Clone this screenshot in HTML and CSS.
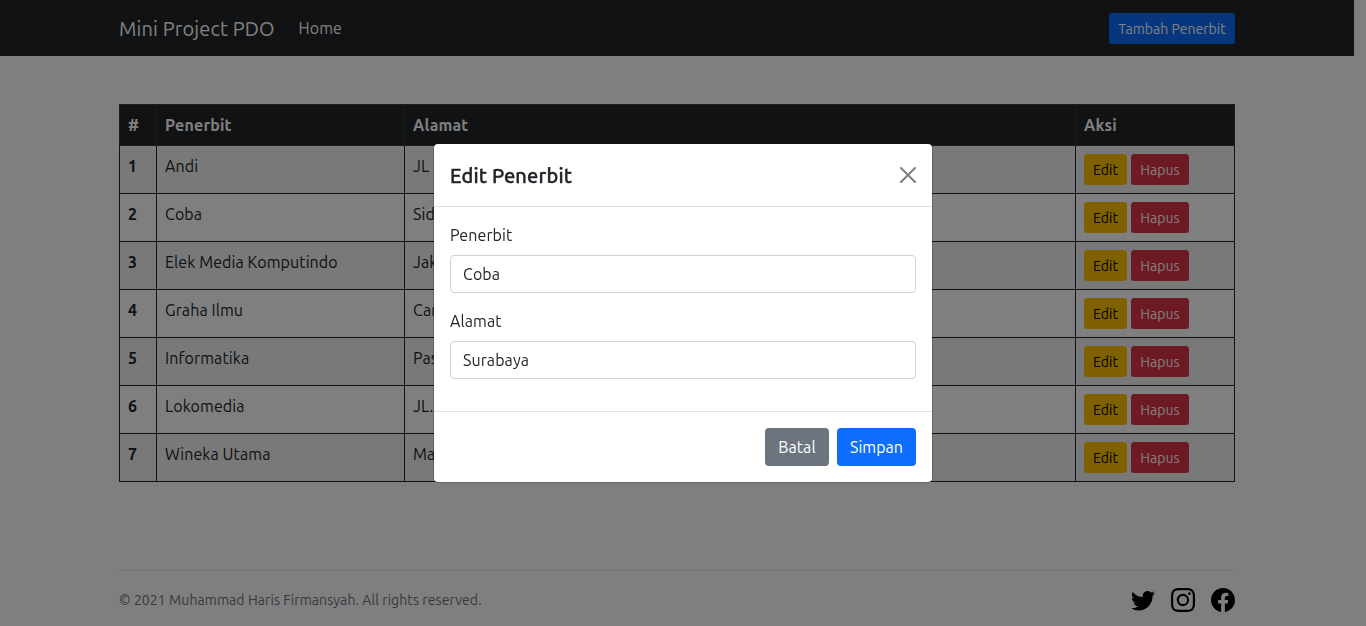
FILE: index.html
```
<!DOCTYPE html>
<html lang="id">
<head>
<meta charset="utf-8">
<title>Mini Project PDO</title>
<link rel="stylesheet" href="styles.css">
</head>
<body>
<div class="page">
  <nav class="navbar">
    <div class="container navbar-row">
      <a class="brand">Mini Project PDO</a>
      <a class="nav-link">Home</a>
      <button class="btn btn-sm btn-primary btn-add">Tambah Penerbit</button>
    </div>
  </nav>
  <main class="container main">
    <table class="table">
      <colgroup><col class="col-no"><col class="col-name"><col class="col-address"><col class="col-action"></colgroup>
      <thead><tr><th>#</th><th>Penerbit</th><th>Alamat</th><th>Aksi</th></tr></thead>
      <tbody>
        <tr><th>1</th><td>Andi</td><td>JL</td><td><div class="actions"><button class="btn btn-sm btn-warning">Edit</button><button class="btn btn-sm btn-danger">Hapus</button></div></td></tr>
        <tr><th>2</th><td>Coba</td><td>Sid</td><td><div class="actions"><button class="btn btn-sm btn-warning">Edit</button><button class="btn btn-sm btn-danger">Hapus</button></div></td></tr>
        <tr><th>3</th><td>Elek Media Komputindo</td><td>Jak</td><td><div class="actions"><button class="btn btn-sm btn-warning">Edit</button><button class="btn btn-sm btn-danger">Hapus</button></div></td></tr>
        <tr><th>4</th><td>Graha Ilmu</td><td>Car</td><td><div class="actions"><button class="btn btn-sm btn-warning">Edit</button><button class="btn btn-sm btn-danger">Hapus</button></div></td></tr>
        <tr><th>5</th><td>Informatika</td><td>Pas</td><td><div class="actions"><button class="btn btn-sm btn-warning">Edit</button><button class="btn btn-sm btn-danger">Hapus</button></div></td></tr>
        <tr><th>6</th><td>Lokomedia</td><td>JL.</td><td><div class="actions"><button class="btn btn-sm btn-warning">Edit</button><button class="btn btn-sm btn-danger">Hapus</button></div></td></tr>
        <tr><th>7</th><td>Wineka Utama</td><td>Ma</td><td><div class="actions"><button class="btn btn-sm btn-warning">Edit</button><button class="btn btn-sm btn-danger">Hapus</button></div></td></tr>
      </tbody>
    </table>
  </main>
  <div class="container">
    <footer class="footer">
      <span class="copyright">© 2021 Muhammad Haris Firmansyah. All rights reserved.</span>
      <div class="social">
        <svg width="24" height="24" viewBox="0 0 16 16"><path d="M5.026 15c6.038 0 9.341-5.003 9.341-9.334 0-.14 0-.282-.006-.422A6.685 6.685 0 0 0 16 3.542a6.658 6.658 0 0 1-1.889.518 3.301 3.301 0 0 0 1.447-1.817 6.533 6.533 0 0 1-2.087.793A3.286 3.286 0 0 0 7.875 6.03a9.325 9.325 0 0 1-6.767-3.429 3.289 3.289 0 0 0 1.018 4.382A3.323 3.323 0 0 1 .64 6.575v.045a3.288 3.288 0 0 0 2.632 3.218 3.203 3.203 0 0 1-.865.115 3.23 3.23 0 0 1-.614-.057 3.283 3.283 0 0 0 3.067 2.277A6.588 6.588 0 0 1 .78 13.58a6.32 6.32 0 0 1-.78-.045A9.344 9.344 0 0 0 5.026 15z"/></svg>
        <svg width="24" height="24" viewBox="0 0 16 16"><path d="M8 0C5.829 0 5.556.01 4.703.048 3.85.088 3.269.222 2.76.42a3.917 3.917 0 0 0-1.417.923A3.927 3.927 0 0 0 .42 2.76C.222 3.268.087 3.85.048 4.7.01 5.555 0 5.827 0 8.001c0 2.172.01 2.444.048 3.297.04.852.174 1.433.372 1.942.205.526.478.972.923 1.417.444.445.89.719 1.416.923.51.198 1.09.333 1.942.372C5.555 15.99 5.827 16 8 16s2.444-.01 3.298-.048c.851-.04 1.434-.174 1.943-.372a3.916 3.916 0 0 0 1.416-.923c.445-.445.718-.891.923-1.417.197-.509.332-1.09.372-1.942C15.99 10.445 16 10.173 16 8s-.01-2.445-.048-3.299c-.04-.851-.175-1.433-.372-1.941a3.926 3.926 0 0 0-.923-1.417A3.911 3.911 0 0 0 13.24.42c-.51-.198-1.092-.333-1.943-.372C10.443.01 10.172 0 7.998 0h.003zm-.717 1.442h.718c2.136 0 2.389.007 3.232.046.78.035 1.204.166 1.486.275.373.145.64.319.92.599.28.28.453.546.598.92.11.281.24.705.275 1.485.039.843.047 1.096.047 3.231s-.008 2.389-.047 3.232c-.035.78-.166 1.203-.275 1.485a2.47 2.47 0 0 1-.599.919c-.28.28-.546.453-.92.598-.28.11-.704.24-1.485.276-.843.038-1.096.047-3.232.047s-2.39-.009-3.233-.047c-.78-.036-1.203-.166-1.485-.276a2.478 2.478 0 0 1-.92-.598 2.48 2.48 0 0 1-.6-.92c-.109-.281-.24-.705-.275-1.485-.038-.843-.046-1.096-.046-3.233 0-2.136.008-2.388.046-3.231.036-.78.166-1.204.276-1.486.145-.373.319-.64.599-.92.28-.28.546-.453.92-.598.282-.11.705-.24 1.485-.276.738-.034 1.024-.044 2.515-.045v.002zm4.988 1.328a.96.96 0 1 0 0 1.92.96.96 0 0 0 0-1.92zm-4.27 1.122a4.109 4.109 0 1 0 0 8.217 4.109 4.109 0 0 0 0-8.217zm0 1.441a2.667 2.667 0 1 1 0 5.334 2.667 2.667 0 0 1 0-5.334z"/></svg>
        <svg width="24" height="24" viewBox="0 0 16 16"><path d="M16 8.049c0-4.446-3.582-8.05-8-8.05C3.58 0-.002 3.603-.002 8.05c0 4.017 2.926 7.347 6.75 7.951v-5.625h-2.03V8.05H6.75V6.275c0-2.017 1.195-3.131 3.022-3.131.876 0 1.791.157 1.791.157v1.98h-1.009c-.993 0-1.303.621-1.303 1.258v1.51h2.218l-.354 2.326H9.25V16c3.824-.604 6.75-3.934 6.75-7.951z"/></svg>
      </div>
    </footer>
  </div>
</div>
<div class="backdrop">
  <div class="modal">
    <div class="modal-header">
      <h5 class="modal-title">Edit Penerbit</h5>
      <svg class="close" width="16" height="16" viewBox="0 0 16 16"><path d="M.293.293a1 1 0 011.414 0L8 6.586 14.293.293a1 1 0 111.414 1.414L9.414 8l6.293 6.293a1 1 0 01-1.414 1.414L8 9.414l-6.293 6.293a1 1 0 01-1.414-1.414L6.586 8 .293 1.707a1 1 0 010-1.414z"/></svg>
    </div>
    <div class="modal-body">
      <label class="label">Penerbit</label>
      <input class="input" value="Coba">
      <label class="label">Alamat</label>
      <input class="input" value="Surabaya">
    </div>
    <div class="modal-footer">
      <button class="btn btn-secondary">Batal</button>
      <button class="btn btn-primary btn-save">Simpan</button>
    </div>
  </div>
</div>
</body>
</html>
```
FILE: styles.css
```
* { box-sizing: border-box; }
body {
  margin: 0;
  height: 626px;
  overflow: hidden;
  background: #fff;
  color: #212529;
  font-family: Ubuntu, "Noto Sans", sans-serif;
  font-size: 16px;
  line-height: 24px;
  letter-spacing: 0.09px;
}
.page { width: 1354px; }
.container { width: 1116px; margin: 0 auto; }
.navbar { height: 56px; background: #212529; }
.navbar-row { height: 56px; display: flex; align-items: center; }
.brand { width: 179.5px; padding-top: 2px; color: #fff; font-size: 20px; line-height: 30px; letter-spacing: 0.13px; white-space: nowrap; }
.nav-link { color: #fff; }
.btn {
  height: 38px;
  padding: 0;
  border: 0;
  border-radius: 4px;
  color: #fff;
  font: inherit;
  letter-spacing: 0.04px;
  text-align: center;
}
.btn-sm { height: 31px; padding-top: 1px; font-size: 14px; line-height: 21px; border-radius: 3.2px; }
.btn-primary { background: #0d6efd; }
.btn-secondary { width: 64px; background: #6c757d; }
.btn-save { width: 79px; }
.btn-add { width: 126px; margin-left: auto; padding-top: 2px; }
.btn-warning { width: 43px; background: #ffc107; color: #000; }
.btn-danger { width: 58px; background: #dc3545; }
.main { padding-top: 48px; }
.table { width: 1116px; table-layout: fixed; border-collapse: collapse; }
.col-no { width: 37px; }
.col-name { width: 248px; }
.col-address { width: 671px; }
.table th, .table td { padding: 8px; border: 1px solid #212529; text-align: left; vertical-align: top; }
.table thead th { background: #212529; color: #fff; border-color: #373b3e; letter-spacing: 0.18px; }
.table tbody tr { height: 48px; }
.table tbody tr:nth-child(odd) { background: #f2f2f2; }
.actions { display: flex; gap: 4px; }
.footer {
  display: flex;
  align-items: center;
  justify-content: space-between;
  margin-top: 88px;
  padding: 17px 0 14px;
  border-top: 1px solid #dee2e6;
}
.copyright { color: #6c757d; font-size: 14px; letter-spacing: 0.08px; }
.social { display: flex; gap: 16px; }
.social svg { display: block; }
.backdrop {
  position: fixed;
  inset: 0;
  display: flex;
  align-items: center;
  justify-content: center;
  background: rgba(0, 0, 0, 0.5);
}
.modal {
  width: 500px;
  border: 1px solid rgba(0, 0, 0, 0.2);
  border-radius: 4.8px;
  background: #fff;
  background-clip: padding-box;
}
.modal-header {
  display: flex;
  align-items: center;
  justify-content: space-between;
  padding: 16px;
  border-bottom: 1px solid #dee2e6;
}
.modal-title {
  margin: 0;
  padding-top: 2px;
  font-size: 20px;
  font-weight: 500;
  line-height: 28px;
  letter-spacing: 0.15px;
  -webkit-text-stroke: 0.35px #212529;
}
.close { opacity: 0.5; }
.modal-body { display: flex; flex-direction: column; padding: 16px; }
.label { margin-bottom: 8px; }
.input {
  height: 38px;
  margin-bottom: 16px;
  padding: 6px 12px;
  border: 1px solid #ced4da;
  border-radius: 4px;
  color: #212529;
  font: inherit;
  letter-spacing: inherit;
}
.modal-footer {
  display: flex;
  justify-content: flex-end;
  gap: 8px;
  padding: 16px;
  border-top: 1px solid #dee2e6;
}
```
